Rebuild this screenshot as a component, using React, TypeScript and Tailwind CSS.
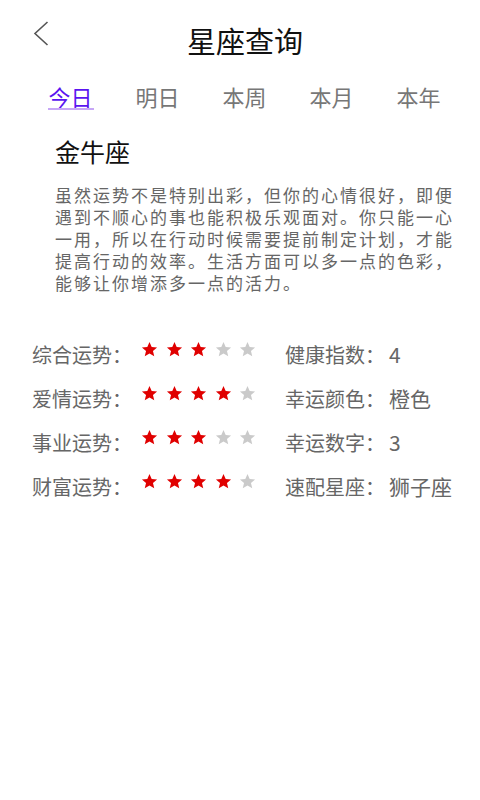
import React from "react";

const FONT = { fontFamily: '"Noto Sans CJK SC", "Noto Sans", sans-serif' };

function Star({ on }: { on: boolean }) {
  return (
    <svg width="17" height="17" viewBox="0 0 24 24" className="shrink-0">
      <path
        d="M12 1.5l3.1 7.1 7.6.6-5.8 5 1.8 7.5L12 17.7l-6.7 4 1.8-7.5-5.8-5 7.6-.6z"
        fill={on ? "#e00000" : "#cacaca"}
      />
    </svg>
  );
}

function Stars({ n }: { n: number }) {
  return (
    <div className="flex items-center gap-[7.5px] ml-[9px] -mt-[12px]">
      {[0, 1, 2, 3, 4].map((i) => (
        <Star key={i} on={i < n} />
      ))}
    </div>
  );
}

const tabs = ["今日", "明日", "本周", "本月", "本年"];
const left: [string, number][] = [
  ["综合运势：", 3],
  ["爱情运势：", 4],
  ["事业运势：", 3],
  ["财富运势：", 4],
];
const right: [string, string][] = [
  ["健康指数：", "4"],
  ["幸运颜色：", "橙色"],
  ["幸运数字：", "3"],
  ["速配星座：", "狮子座"],
];

export default function App() {
  return (
    <div className="w-[480px] h-[800px] bg-white overflow-hidden" style={FONT}>
      <div className="flex items-start h-[84px]">
        <div className="w-[60px] pl-[33px] pt-[21px]">
          <svg width="16" height="25" viewBox="0 0 16 25">
            <path d="M14.5 1 L2 12.5 L14.5 24" fill="none" stroke="#555" strokeWidth="1.6" />
          </svg>
        </div>
        <div className="flex-1 text-center mt-[25px] text-[29px] leading-[30px] text-[#111] whitespace-nowrap">
          星座查询
        </div>
        <div className="w-[50px]" />
      </div>

      <div className="grid grid-cols-5 pl-[27px] pr-[18px]">
        {tabs.map((t, i) => (
          <div key={t} className="flex flex-col items-center">
            <div
              className={
                "text-[22px] leading-[24px] " +
                (i === 0 ? "text-[#5a14f0]" : "text-[#777]")
              }
            >
              {t}
            </div>
            <div className={"h-[2px] w-[46px] " + (i === 0 ? "bg-[#c6a6f6]" : "bg-transparent")} />
          </div>
        ))}
      </div>

      <div className="pl-[55px] mt-[26px] text-[25px] leading-[30px] text-[#111]">金牛座</div>

      <p className="ml-[55px] mt-[18px] w-[402px] text-[17px] leading-[22px] tracking-[2px] text-[#666]">
        虽然运势不是特别出彩，但你的心情很好，即便遇到不顺心的事也能积极乐观面对。你只能一心一用，所以在行动时候需要提前制定计划，才能提高行动的效率。生活方面可以多一点的色彩，能够让你增添多一点的活力。
      </p>

      <div className="grid grid-cols-[253px_1fr] auto-rows-[44px] pl-[32px] mt-[39px] text-[20px] leading-[44px] text-[#666]">
        {left.map(([label, n], i) => (
          <React.Fragment key={label}>
            <div className="flex items-center">
              <span>{label}</span>
              <Stars n={n} />
            </div>
            <div className="flex items-baseline whitespace-nowrap">
              <span>{right[i][0]}</span>
              <span className="ml-[4px] text-[21px] leading-[42px]">{right[i][1]}</span>
            </div>
          </React.Fragment>
        ))}
      </div>
    </div>
  );
}
